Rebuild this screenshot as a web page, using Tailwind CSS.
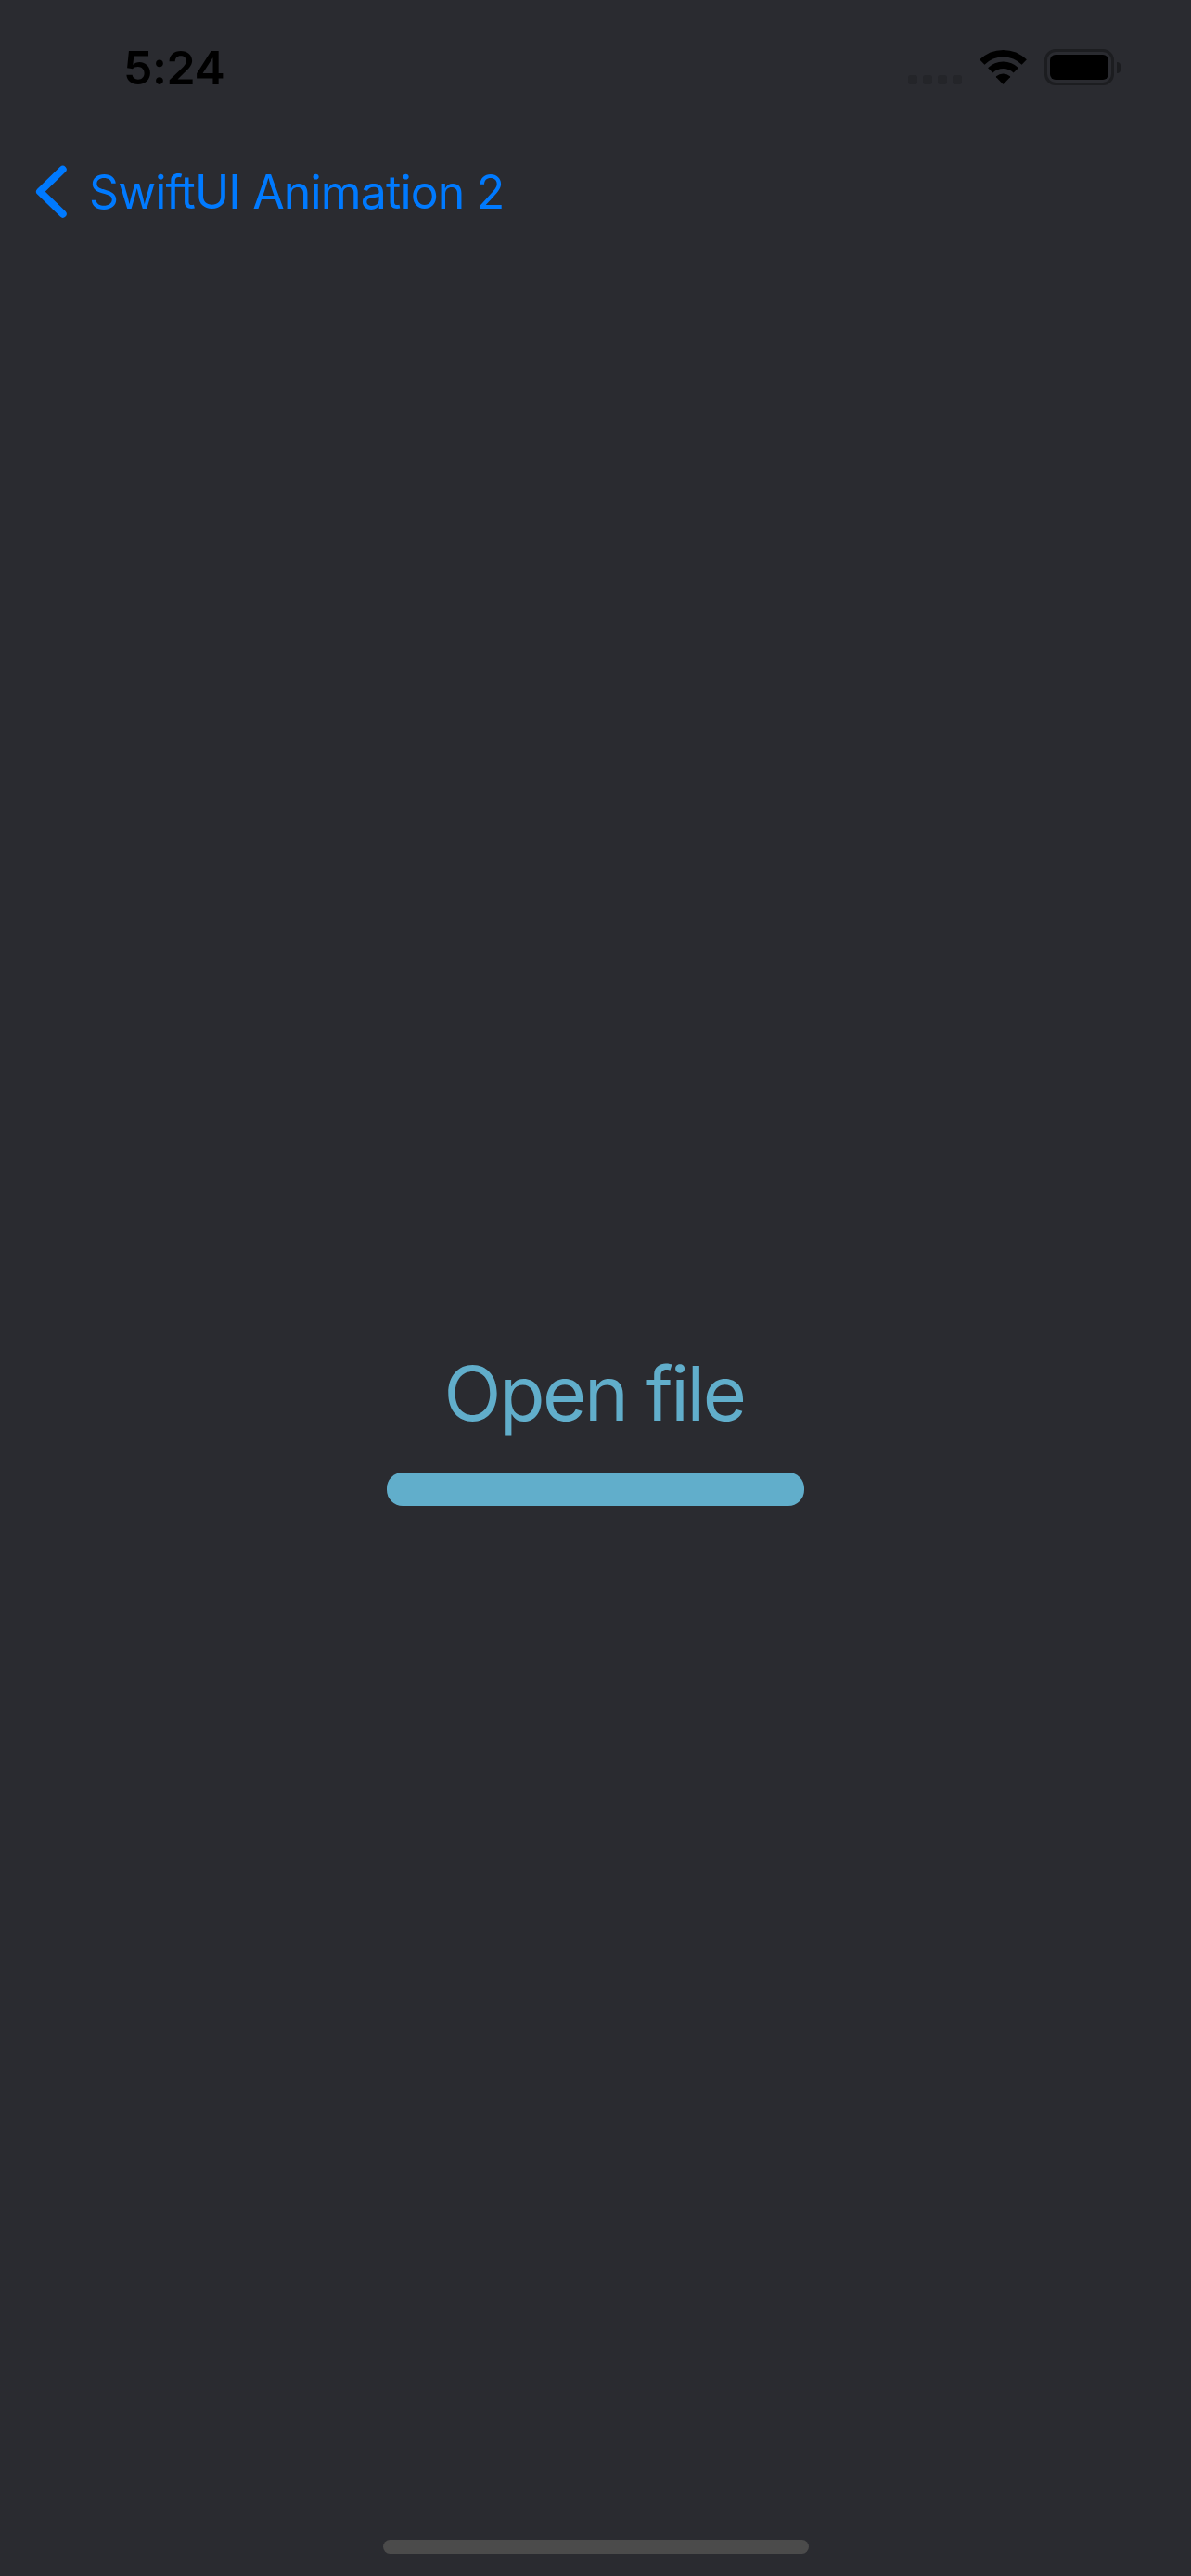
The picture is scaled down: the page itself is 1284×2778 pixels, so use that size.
<!DOCTYPE html>
<html lang="en">
<head>
<meta charset="utf-8">
<title>SwiftUI Animation 2</title>
<script src="https://cdn.jsdelivr.net/npm/@tailwindcss/browser@4"></script>
</head>
<body class="bg-[#2a2b30] font-['Inter',sans-serif]">
<div class="flex h-[2778px] w-[1284px] flex-col overflow-hidden">
  <header class="flex h-[146px] items-start justify-between pt-[48px] pr-[76px] pl-[133px]">
    <div class="text-[50px] leading-[50px] font-semibold tracking-[-0.4px] whitespace-nowrap text-black">5:24</div>
    <div class="flex">
      <!-- Cellular, no signal -->
      <div class="mt-[33px] flex gap-[6px]">
        <span class="size-[10px] rounded-[3px] bg-[#242529]"></span>
        <span class="size-[10px] rounded-[3px] bg-[#242529]"></span>
        <span class="size-[10px] rounded-[3px] bg-[#242529]"></span>
        <span class="size-[10px] rounded-[3px] bg-[#242529]"></span>
      </div>
      <!-- Wi-Fi -->
      <svg class="mt-[5px] ml-[19px] h-[39px] w-[51px]" viewBox="0 0 51 39" fill="none">
        <path d="M2.8 14 A32.3 32.3 0 0 1 48.2 14" stroke="#000" stroke-width="7.6"/>
        <path d="M11.7 22.9 A19.8 19.8 0 0 1 39.3 22.9" stroke="#000" stroke-width="7.6"/>
        <path d="M18 30.2 Q17.6 29.7 18.1 29.2 A11.3 11.3 0 0 1 32.9 29.2 Q33.4 29.7 33 30.2 L26 37.6 Q25.5 38.1 25 37.6 Z" fill="#000"/>
      </svg>
      <!-- Battery -->
      <div class="mt-[5px] ml-[19px] flex items-center">
        <div class="h-[39px] w-[75px] rounded-[12px] border-3 border-[#1c1d20] p-[3px]">
          <div class="h-[27px] w-[63px] rounded-[6px] bg-black"></div>
        </div>
        <div class="ml-[3px] h-[12px] w-[4px] rounded-r-full bg-[#1b1c1f]"></div>
      </div>
    </div>
  </header>
  <nav class="flex h-[122px] items-center pl-[38px]">
    <svg class="h-[58px] w-[36px]" viewBox="0 0 36 58" fill="none" stroke="#007aff" stroke-width="8" stroke-linecap="round" stroke-linejoin="round"><path d="M29.7 4.7 L5 28.7 L29.7 52.7"/></svg>
    <a class="ml-[22px] text-[50px] leading-[60px] tracking-[-0.85px] whitespace-nowrap text-[#007aff]">SwiftUI Animation 2</a>
  </nav>
  <main class="flex grow flex-col items-center pt-[1185px]">
    <h1 class="pr-[3px] text-[81px] leading-[100px] font-normal tracking-[-2.4px] whitespace-nowrap text-[#61aecb]">Open file</h1>
    <div class="mt-[35px] h-[36px] w-[450px] rounded-[17px] bg-[#61aecb]"></div>
  </main>
  <div class="mb-[24px] ml-[413px] h-[15px] w-[459px] rounded-full bg-[#4b4b4b]"></div>
</div>
</body>
</html>
